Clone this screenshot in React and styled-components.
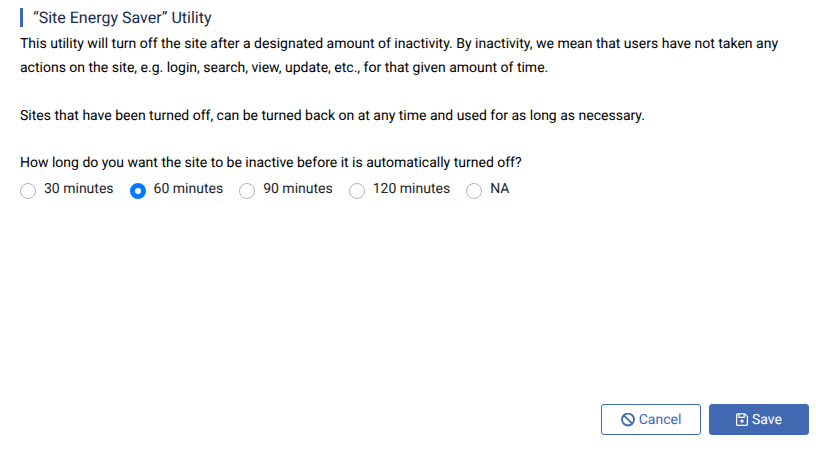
import React, { useState } from "react";
import styled, { createGlobalStyle } from "styled-components";

const GlobalStyle = createGlobalStyle`
  * { box-sizing: border-box; }
  body {
    margin: 0;
    background: #fff;
    font-family: Roboto, sans-serif;
    color: #000;
    text-rendering: geometricPrecision;
    -webkit-font-smoothing: antialiased;
  }
`;

const Page = styled.main`
  display: flex;
  flex-direction: column;
  height: 450px;
  padding: 8px 7px 15px 20px;
  overflow: hidden;
`;

const Title = styled.h1`
  margin: 0;
  height: 19px;
  padding-left: 10px;
  border-left: 3px solid #4169b2;
  font-size: 16px;
  font-weight: 400;
  line-height: 19px;
  color: #172b4d;
`;

const Text = styled.p`
  margin: ${(p) => p.$top || 0}px 0 0;
  font-size: 14px;
  line-height: 24px;
  white-space: nowrap;
`;

const Options = styled.div`
  display: flex;
  gap: 16px;
  margin-top: 4px;
`;

const Option = styled.label`
  display: flex;
  align-items: flex-start;
  gap: 8px;
  font-size: 14px;
  line-height: 20px;
  color: #212529;
`;

const Radio = styled.input`
  appearance: none;
  width: 16px;
  height: 16px;
  margin: 4px 0 0;
  border: 1px solid #adb5bd;
  border-radius: 50%;
  background: #fff;
  &:checked {
    border: 5px solid #007bff;
  }
`;

const Footer = styled.footer`
  display: flex;
  justify-content: flex-end;
  gap: 8px;
  margin-top: auto;
`;

const Button = styled.button`
  display: flex;
  align-items: center;
  justify-content: center;
  gap: 4px;
  width: 100px;
  height: 31px;
  padding: 0;
  border: 1px solid #4169b2;
  border-radius: 3px;
  background: ${(p) => (p.$primary ? "#4169b2" : "#fff")};
  color: ${(p) => (p.$primary ? "#fff" : "#4169b2")};
  font: 400 14px/20px Roboto, sans-serif;
  text-rendering: inherit;
`;

const choices = ["30 minutes", "60 minutes", "90 minutes", "120 minutes", "NA"];

export default function App() {
  const [value, setValue] = useState("60 minutes");
  return (
    <Page>
      <GlobalStyle />
      <Title>“Site Energy Saver” Utility</Title>
      <Text $top={5}>
        This utility will turn off the site after a designated amount of inactivity. By inactivity, we mean that users have not taken any
        <br />
        actions on the site, e.g. login, search, view, update, etc., for that given amount of time.
      </Text>
      <Text $top={24}>Sites that have been turned off, can be turned back on at any time and used for as long as necessary.</Text>
      <Text $top={23}>How long do you want the site to be inactive before it is automatically turned off?</Text>
      <Options>
        {choices.map((c) => (
          <Option key={c}>
            <Radio type="radio" name="delay" checked={value === c} onChange={() => setValue(c)} />
            {c}
          </Option>
        ))}
      </Options>
      <Footer>
        <Button type="button">
          <svg width="14" height="14" viewBox="0 0 14 14" fill="none" stroke="currentColor" strokeWidth="1.8">
            <circle cx="7" cy="6.5" r="6" />
            <path d="M2.8 2.3l8.4 8.4" />
          </svg>
          Cancel
        </Button>
        <Button type="button" $primary>
          <svg width="12" height="14" viewBox="0 0 12 14" fill="none" stroke="currentColor" strokeWidth="1.2">
            <path d="M1.6 .9h7.2L11.4 3.5v7.8a1 1 0 0 1-1 1H1.6a1 1 0 0 1-1-1V1.9a1 1 0 0 1 1-1z" />
            <path d="M2.9 1v3.3h5.3V1" />
            <circle cx="6" cy="8.1" r="1.7" fill="currentColor" stroke="none" />
          </svg>
          Save
        </Button>
      </Footer>
    </Page>
  );
}
